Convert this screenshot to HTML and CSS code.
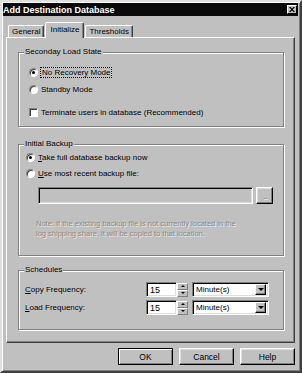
FILE: index.html
```html
<!DOCTYPE html>
<html lang="en">
<head>
    <meta charset="UTF-8">
    <meta name="viewport" content="width=device-width, initial-scale=1.0">
    <title>Add Destination Database</title>
    <link rel="stylesheet" href="styles.css">
</head>
<body>
    <div class="window">
        <div class="titlebar">
            <span class="title">Add Destination Database</span>
            <span class="close">
                <svg width="6" height="5" viewBox="0 0 6 5"><path d="M0 0h1.5l1.5 1.5 1.5-1.5h1.5l-2.2 2.5 2.2 2.5h-1.5l-1.5-1.5-1.5 1.5h-1.5l2.2-2.5z" fill="#000"/></svg>
            </span>
        </div>

        <div class="tabs">
            <div class="tab">General</div>
            <div class="tab active">Initialize</div>
            <div class="tab">Thresholds</div>
        </div>

        <div class="panel">
            <div class="group group-load">
                <div class="legend">Seconday Load State</div>
                <div class="option">
                    <span class="radio checked"></span>
                    <span class="focus">No Recovery Mode</span>
                </div>
                <div class="option option-gap">
                    <span class="radio"></span>
                    <span>Standby Mode</span>
                </div>
                <div class="option option-check">
                    <span class="checkbox"></span>
                    <span>Terminate users in database (Recommended)</span>
                </div>
            </div>

            <div class="group group-backup">
                <div class="legend">Initial Backup</div>
                <div class="option">
                    <span class="radio checked"></span>
                    <span><u>T</u>ake full database backup now</span>
                </div>
                <div class="option option-tight">
                    <span class="radio"></span>
                    <span><u>U</u>se most recent backup file:</span>
                </div>
                <div class="file-row">
                    <div class="field disabled"></div>
                    <div class="btn browse">...</div>
                </div>
                <p class="note">Note: If the existing backup file is not currently located in the<br>log shipping share, it will be copied to that location.</p>
            </div>

            <div class="group group-schedules">
                <div class="legend">Schedules</div>
                <div class="schedule-row">
                    <span class="label"><u>C</u>opy Frequency:</span>
                    <div class="field spin-edit">15</div>
                    <div class="spin">
                        <div class="spin-btn"><span class="arrow-up"></span></div>
                        <div class="spin-btn"><span class="arrow-down"></span></div>
                    </div>
                    <div class="field combo">
                        <span>Minute(s)</span>
                        <div class="combo-btn"><span class="arrow-down"></span></div>
                    </div>
                </div>
                <div class="schedule-row">
                    <span class="label"><u>L</u>oad Frequency:</span>
                    <div class="field spin-edit">15</div>
                    <div class="spin">
                        <div class="spin-btn"><span class="arrow-up"></span></div>
                        <div class="spin-btn"><span class="arrow-down"></span></div>
                    </div>
                    <div class="field combo">
                        <span>Minute(s)</span>
                        <div class="combo-btn"><span class="arrow-down"></span></div>
                    </div>
                </div>
            </div>
        </div>

        <div class="actions">
            <div class="btn default">OK</div>
            <div class="btn">Cancel</div>
            <div class="btn">Help</div>
        </div>
    </div>
</body>
</html>
```

FILE: styles.css
```css
body {
    margin: 0;
    font-family: "Liberation Sans", Arial, sans-serif;
    font-size: 8px;
    color: #000;
    background-color: #c0c0c0;
}
.window {
    box-sizing: border-box;
    width: 302px;
    height: 373px;
    padding: 1px 2px 0 1px;
    background-color: #c0c0c0;
    border-style: solid;
    border-width: 2px;
    border-color: #dfdfdf #404040 #404040 #dfdfdf;
    box-shadow: inset 1px 1px 0 #fff, inset -1px -1px 0 #808080;
    display: flex;
    flex-direction: column;
}
.titlebar {
    height: 13px;
    background-color: #0a0a0a;
    display: flex;
    align-items: center;
    justify-content: space-between;
    padding: 0 1px 0 0;
}
.title {
    color: #fff;
    font-weight: bold;
    font-size: 9px;
}
.close {
    box-sizing: border-box;
    width: 10px;
    height: 9px;
    background-color: #c0c0c0;
    border: 1px solid;
    border-color: #fff #000 #000 #fff;
    display: flex;
    align-items: center;
    justify-content: center;
}

/* tabs */
.tabs {
    display: flex;
    align-items: flex-end;
    height: 15px;
    margin: 6px 0 0 5px;
    position: relative;
    z-index: 1;
}
.tab {
    box-sizing: border-box;
    height: 12px;
    padding: 0 3px;
    display: flex;
    align-items: center;
    border-style: solid;
    border-width: 1px 1px 0 1px;
    border-color: #fff #404040 transparent #fff;
    border-radius: 2px 2px 0 0;
    box-shadow: inset -1px 0 0 #808080;
}
.tab.active {
    height: 16px;
    margin: 0 0 -1px 1px;
    padding: 0 4px 2px;
    background-color: #c0c0c0;
}
.tab + .tab.active + .tab {
    margin-left: 1px;
}

/* panel */
.panel {
    height: 306px;
    box-sizing: border-box;
    margin: 0 3px 0 3px;
    padding: 14px 10px 0 11px;
    border-style: solid;
    border-width: 1px;
    border-color: #fff #404040 #404040 #fff;
    box-shadow: inset -1px -1px 0 #808080;
}
.group {
    position: relative;
    box-sizing: border-box;
    border: 1px solid #808080;
    box-shadow: inset 1px 1px 0 #fff, 1px 1px 0 #fff;
}
.legend {
    position: absolute;
    top: -6px;
    left: 5px;
    padding: 0 1px;
    line-height: 10px;
    background-color: #c0c0c0;
}
.group-load {
    height: 75px;
    padding: 13px 0 0 10px;
}
.group-backup {
    height: 112px;
    margin-top: 17px;
    padding: 6px 0 0 7px;
}
.group-schedules {
    height: 60px;
    margin-top: 14px;
    padding: 11px 0 0 6px;
}

.option {
    height: 12px;
    display: flex;
    align-items: center;
    gap: 3px;
}
.option-gap {
    margin-top: 5px;
}
.option-tight {
    margin-top: 4px;
}
.option-check {
    margin-top: 11px;
}
.focus {
    outline: 1px dotted #000;
    padding: 0 1px;
}
.radio {
    box-sizing: border-box;
    width: 9px;
    height: 9px;
    border-radius: 50%;
    background-color: #fff;
    border: 1px solid;
    border-color: #808080 #fff #fff #808080;
    box-shadow: inset 1px 1px 0 #404040;
    display: flex;
    align-items: center;
    justify-content: center;
}
.radio.checked::after {
    content: "";
    width: 3px;
    height: 3px;
    border-radius: 50%;
    background-color: #000;
}
.checkbox {
    box-sizing: border-box;
    width: 9px;
    height: 9px;
    background-color: #fff;
    border: 1px solid;
    border-color: #808080 #fff #fff #808080;
    box-shadow: inset 1px 1px 0 #404040;
}

/* fields and buttons */
.field {
    box-sizing: border-box;
    background-color: #fff;
    border: 1px solid;
    border-color: #808080 #fff #fff #808080;
    box-shadow: inset 1px 1px 0 #000, inset -1px -1px 0 #dfdfdf;
}
.field.disabled {
    background-color: #c0c0c0;
}
.file-row {
    display: flex;
    gap: 3px;
    margin: 8px 0 0 12px;
    height: 17px;
}
.file-row .field {
    width: 215px;
}
.btn {
    box-sizing: border-box;
    display: flex;
    align-items: center;
    justify-content: center;
    background-color: #c0c0c0;
    border: 1px solid;
    border-color: #fff #000 #000 #fff;
    box-shadow: inset -1px -1px 0 #808080, inset 1px 1px 0 #dfdfdf;
}
.btn.browse {
    width: 17px;
    color: #808080;
    text-shadow: 1px 1px 0 #fff;
    letter-spacing: -1px;
    align-items: flex-end;
    padding-bottom: 2px;
}
.note {
    margin: 15px 0 0 10px;
    line-height: 10px;
    font-size: 7.5px;
    color: #8a8a8a;
    text-shadow: 1px 1px 0 #e8e8e8;
}

.schedule-row {
    display: flex;
    align-items: center;
    height: 15px;
}
.schedule-row + .schedule-row {
    margin-top: 3px;
}
.label {
    width: 121px;
}
.spin-edit {
    width: 31px;
    height: 15px;
    padding: 1px 0 0 3px;
    font-size: 9px;
    line-height: 12px;
}
.spin {
    display: flex;
    flex-direction: column;
    width: 11px;
    height: 14px;
    margin-right: 4px;
}
.spin-btn {
    flex: 1;
    display: flex;
    align-items: center;
    justify-content: center;
    background-color: #c0c0c0;
    border: 1px solid;
    border-color: #fff #808080 #808080 #fff;
}
.arrow-up {
    border-left: 2px solid transparent;
    border-right: 2px solid transparent;
    border-bottom: 2px solid #000;
}
.arrow-down {
    border-left: 2px solid transparent;
    border-right: 2px solid transparent;
    border-top: 2px solid #000;
}
.combo {
    width: 77px;
    height: 15px;
    display: flex;
    align-items: center;
    justify-content: space-between;
    padding: 2px 2px 2px 3px;
}
.combo-btn {
    box-sizing: border-box;
    width: 11px;
    height: 11px;
    display: flex;
    align-items: center;
    justify-content: center;
    background-color: #c0c0c0;
    border: 1px solid;
    border-color: #fff #000 #000 #fff;
    box-shadow: inset -1px -1px 0 #808080;
}
.combo-btn .arrow-down {
    border-left-width: 3px;
    border-right-width: 3px;
    border-top-width: 3px;
}

.actions {
    display: flex;
    justify-content: flex-end;
    gap: 6px;
    margin: 5px 3px 0 0;
}
.actions .btn {
    width: 55px;
    height: 17px;
    font-size: 8.5px;
}
.actions .btn.default {
    border-color: #000;
    box-shadow: inset 1px 1px 0 #fff, inset -1px -1px 0 #808080;
}
```
